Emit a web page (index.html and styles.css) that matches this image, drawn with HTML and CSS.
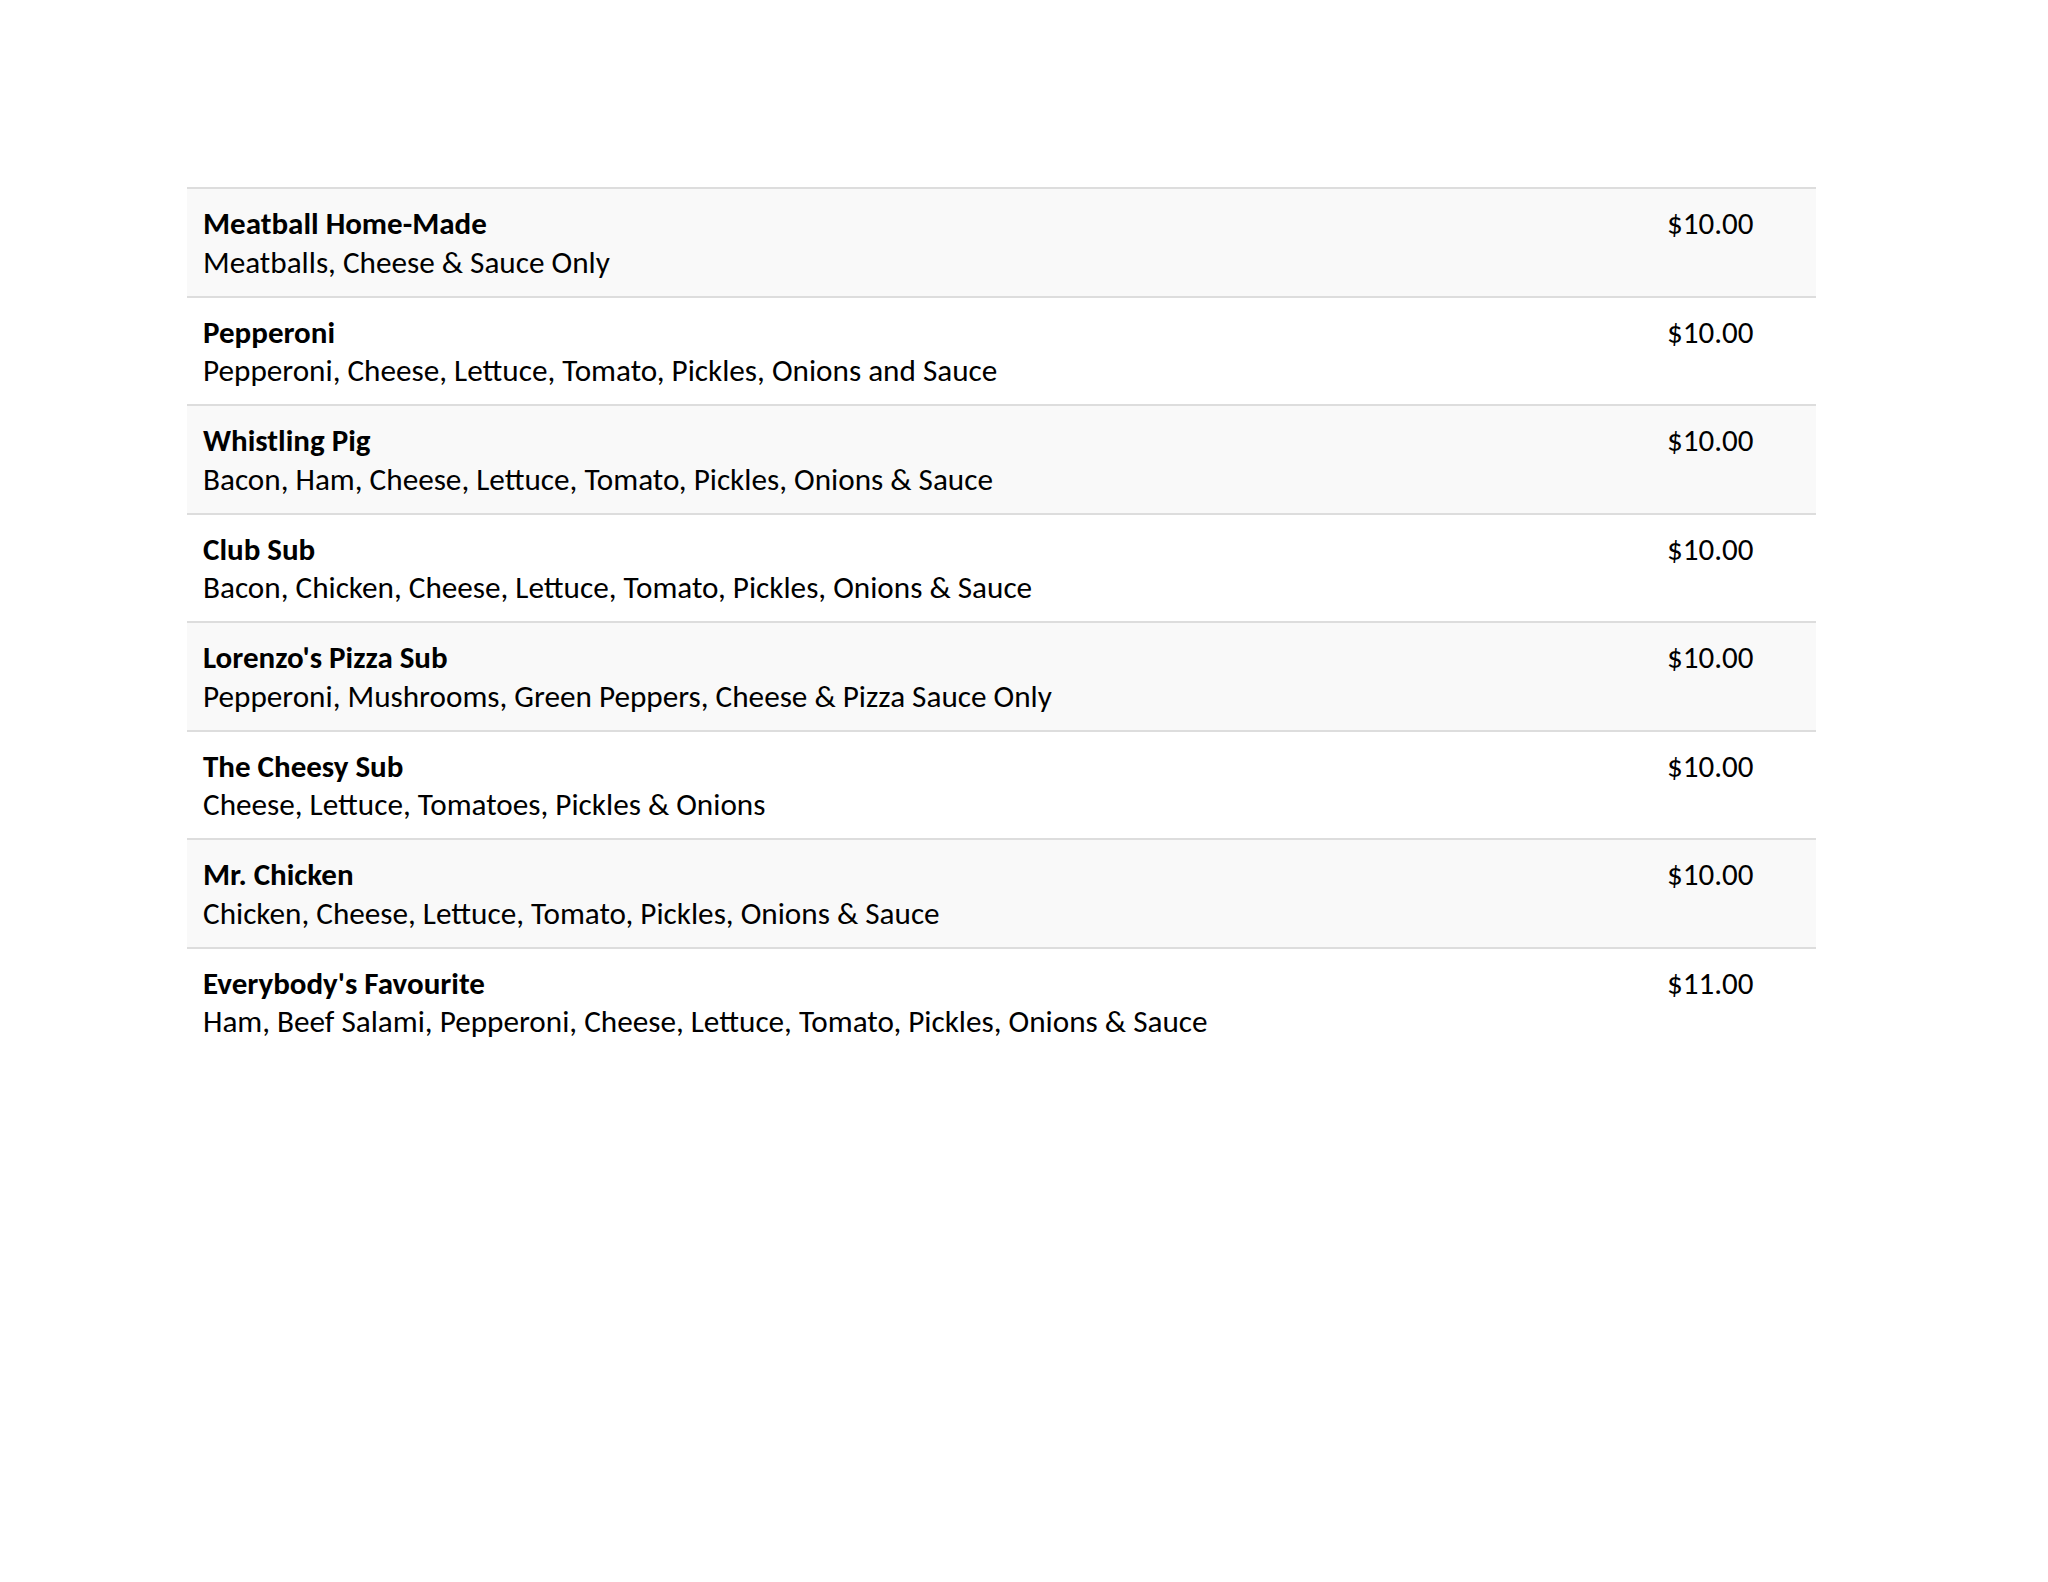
FILE: index.html
```html
<!DOCTYPE html>
<html lang="en">
<head>
<meta charset="utf-8">
<title>Subs Menu</title>
<link rel="stylesheet" href="styles.css">
</head>
<body>
<main class="page">
  <table class="menu">
    <tbody>
      <tr><td class="item"><div class="name">Meatball Home-Made</div><div class="desc">Meatballs, Cheese &amp; Sauce Only</div></td><td class="price">$10.00</td></tr>
      <tr><td class="item"><div class="name">Pepperoni</div><div class="desc">Pepperoni, Cheese, Lettuce, Tomato, Pickles, Onions and Sauce</div></td><td class="price">$10.00</td></tr>
      <tr><td class="item"><div class="name">Whistling Pig</div><div class="desc">Bacon, Ham, Cheese, Lettuce, Tomato, Pickles, Onions &amp; Sauce</div></td><td class="price">$10.00</td></tr>
      <tr><td class="item"><div class="name">Club Sub</div><div class="desc">Bacon, Chicken, Cheese, Lettuce, Tomato, Pickles, Onions &amp; Sauce</div></td><td class="price">$10.00</td></tr>
      <tr><td class="item"><div class="name">Lorenzo's Pizza Sub</div><div class="desc">Pepperoni, Mushrooms, Green Peppers, Cheese &amp; Pizza Sauce Only</div></td><td class="price">$10.00</td></tr>
      <tr><td class="item"><div class="name">The Cheesy Sub</div><div class="desc">Cheese, Lettuce, Tomatoes, Pickles &amp; Onions</div></td><td class="price">$10.00</td></tr>
      <tr><td class="item"><div class="name">Mr. Chicken</div><div class="desc">Chicken, Cheese, Lettuce, Tomato, Pickles, Onions &amp; Sauce</div></td><td class="price">$10.00</td></tr>
      <tr><td class="item"><div class="name">Everybody's Favourite</div><div class="desc">Ham, Beef Salami, Pepperoni, Cheese, Lettuce, Tomato, Pickles, Onions &amp; Sauce</div></td><td class="price">$11.00</td></tr>
    </tbody>
  </table>
</main>
</body>
</html>
```

FILE: styles.css
```css
html, body {
  margin: 0;
  padding: 0;
  background: #ffffff;
}

body {
  font-family: Carlito, Calibri, Lato, "Liberation Sans", sans-serif;
  font-size: 31px;
  color: #000000;
}

.page {
  padding: 187px 232px 0 187px;
}

.menu {
  width: 100%;
  border-collapse: collapse;
  border-spacing: 0;
}

.menu tr:nth-child(odd) {
  background: #f9f9f9;
}

.menu td {
  border-top: 2px solid #dddddd;
  padding: 15px 16px 14px;
  vertical-align: top;
  line-height: 38.75px;
}

.name {
  font-weight: 700;
}

.desc {
  font-size: 31.2px;
}

.price {
  width: 133px;
  white-space: nowrap;
}
```
